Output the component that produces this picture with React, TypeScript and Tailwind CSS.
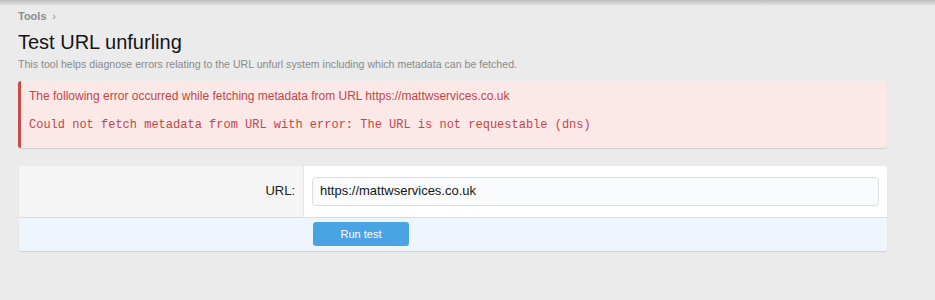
import React from 'react';

export default function App() {
  return (
    <div className="min-h-[300px] w-[935px] bg-[#ebebeb] font-['Liberation_Sans',Arial,sans-serif]">
      <div className="h-[6px] bg-gradient-to-b from-[#bdbdbd] to-[#ebebeb]" />
      <div className="pl-[18px] pr-[48px]">
        <div className="mt-[2px] flex items-center gap-[6px] text-[11px] font-bold text-[#8c8c8c]">
          <span>Tools</span>
          <span className="text-[10px] font-normal">›</span>
        </div>
        <h1 className="mt-[5px] text-[20px] leading-[24px] text-[#141414]">Test URL unfurling</h1>
        <p className="mt-[3px] text-[10.6px] leading-[14px] text-[#8a8a8a]">
          This tool helps diagnose errors relating to the URL unfurl system including which metadata can be fetched.
        </p>

        <div className="mt-[10px] rounded-[3px] border-l-[3px] border-[#c84b4b] bg-[#fde8e8] px-[8px] pb-[15px] pt-[7px] shadow-[0_1px_1px_rgba(0,0,0,0.12)]">
          <div className="text-[12px] leading-[16px] text-[#c64545]">
            The following error occurred while fetching metadata from URL https://mattwservices.co.uk
          </div>
          <div className="mt-[13px] font-['Liberation_Mono','Courier_New',monospace] text-[12px] leading-[16px] text-[#c64545]">
            Could not fetch metadata from URL with error: The URL is not requestable (dns)
          </div>
        </div>

        <div className="ml-px mt-[18px] overflow-hidden rounded-[3px] bg-white shadow-[0_1px_1px_rgba(0,0,0,0.12)]">
          <div className="flex h-[52px] border-b border-[#dcdcdc]">
            <div className="flex w-[285px] items-center justify-end border-r border-[#e4e4e4] bg-[#f5f5f5] pr-[8px] text-[13px] text-[#222]">
              URL:
            </div>
            <div className="flex flex-1 items-center pl-[8px] pr-[8px]">
              <div className="flex h-[29px] w-full items-center rounded-[4px] border border-[#dedede] bg-[#f9fbfd] px-[7px] text-[13px] text-[#141414]">
                https://mattwservices.co.uk
              </div>
            </div>
          </div>
          <div className="flex h-[33px] items-center bg-[#eef5fd] pl-[294px]">
            <button className="flex h-[24px] w-[96px] items-center justify-center rounded-[3px] bg-[#4aa3e3] text-[11px] text-white">
              Run test
            </button>
          </div>
        </div>
      </div>
    </div>
  );
}
